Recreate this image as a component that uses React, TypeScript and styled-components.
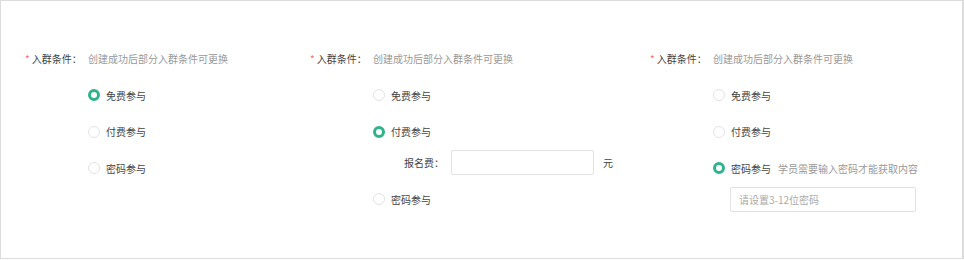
import React from "react";
import styled, { createGlobalStyle } from "styled-components";

const Global = createGlobalStyle`
  html, body { margin: 0; padding: 0; background: #fff; }
  body { font-family: "Noto Sans CJK SC", "Noto Sans", sans-serif; }
`;

const Frame = styled.div`
  box-sizing: border-box;
  width: 964px;
  height: 259px;
  border: 1px solid #dcdcdc;
  border-right-width: 2px;
  padding: 47px 0 0 24px;
  display: grid;
  grid-template-columns: 285px 340px auto;
  align-items: start;
`;

const FormItem = styled.div`
  display: flex;
  flex-direction: column;
`;

const LabelRow = styled.div`
  display: flex;
  align-items: center;
  height: 20px;
  font-size: 10px;
`;

const Label = styled.span`
  width: 63px;
  flex: none;
  color: #444;
  white-space: nowrap;
  &::before {
    content: "*";
    color: #f56c6c;
    margin-right: 2px;
  }
`;

const Help = styled.span`
  color: #999;
  white-space: nowrap;
`;

const Group = styled.div`
  display: flex;
  flex-direction: column;
  margin-top: 9px;
  padding-left: 63px;
`;

const Option = styled.label`
  display: flex;
  align-items: center;
  height: 36.5px;
  font-size: 10px;
  color: #444;
  white-space: nowrap;
`;

const Dot = styled.span<{ $on?: boolean }>`
  box-sizing: border-box;
  width: 12px;
  height: 12px;
  border-radius: 50%;
  margin-right: 6px;
  flex: none;
  border: ${(p) => (p.$on ? "3.5px solid #2fb38b" : "1px solid #e3e3e3")};
  background: #fff;
`;

const Hint = styled.span`
  color: #999;
  margin-left: 7px;
`;

const FeeRow = styled.div`
  display: flex;
  align-items: center;
  height: 25px;
  margin-bottom: 6px;
  padding-left: 31px;
  font-size: 10px;
  color: #444;
`;

const FeeLabel = styled.span`
  width: 47px;
  white-space: nowrap;
`;

const Box = styled.div<{ $w: number }>`
  box-sizing: border-box;
  width: ${(p) => p.$w}px;
  height: 25px;
  border: 1px solid #e2e2e2;
  border-radius: 2px;
  display: flex;
  align-items: center;
  padding-left: 8px;
  font-size: 10px;
  color: #aaa;
  white-space: nowrap;
`;

const Unit = styled.span`
  margin-left: 9px;
`;

const PwdRow = styled.div`
  padding-left: 17px;
`;

type Mode = "free" | "paid" | "pwd";

function Item({ mode }: { mode: Mode }) {
  return (
    <FormItem>
      <LabelRow>
        <Label>入群条件：</Label>
        <Help>创建成功后部分入群条件可更换</Help>
      </LabelRow>
      <Group>
        <Option>
          <Dot $on={mode === "free"} />
          免费参与
        </Option>
        <Option>
          <Dot $on={mode === "paid"} />
          付费参与
        </Option>
        {mode === "paid" && (
          <FeeRow>
            <FeeLabel>报名费：</FeeLabel>
            <Box $w={143} />
            <Unit>元</Unit>
          </FeeRow>
        )}
        <Option>
          <Dot $on={mode === "pwd"} />
          密码参与
          {mode === "pwd" && <Hint>学员需要输入密码才能获取内容</Hint>}
        </Option>
        {mode === "pwd" && (
          <PwdRow>
            <Box $w={186}>请设置3-12位密码</Box>
          </PwdRow>
        )}
      </Group>
    </FormItem>
  );
}

export default function App() {
  return (
    <>
      <Global />
      <Frame>
        <Item mode="free" />
        <Item mode="paid" />
        <Item mode="pwd" />
      </Frame>
    </>
  );
}
